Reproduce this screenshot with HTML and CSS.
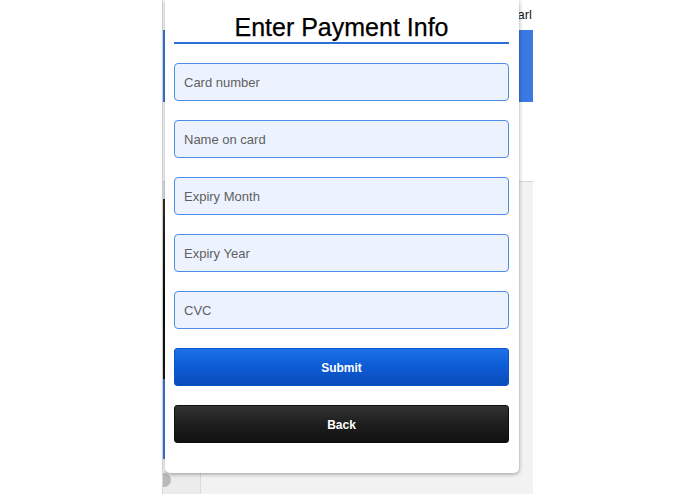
FILE: index.html
```html
<!DOCTYPE html>
<html>
<head>
<meta charset="utf-8">
<link rel="stylesheet" href="styles.css">
</head>
<body>
<div class="page">
  <div class="bg">
    <div class="topbar"><span class="toplink">arl</span></div>
    <div class="band"></div>
    <div class="hero"></div>
    <div class="main">
      <div class="side">
        <div class="side-gap"></div>
        <div class="side-photo"></div>
        <div class="side-blue"></div>
        <div class="side-white"></div>
        <div class="side-foot"><span class="dot"></span></div>
      </div>
      <div class="content"></div>
    </div>
  </div>

  <div class="modal">
    <h1 class="title">Enter Payment Info</h1>
    <form class="form">
      <input class="field" type="text" placeholder="Card number">
      <input class="field" type="text" placeholder="Name on card">
      <input class="field" type="text" placeholder="Expiry Month">
      <input class="field" type="text" placeholder="Expiry Year">
      <input class="field" type="text" placeholder="CVC">
      <button class="btn btn-submit" type="button">Submit</button>
      <button class="btn btn-back" type="button">Back</button>
    </form>
  </div>
</div>
</body>
</html>
```

FILE: styles.css
```css
* { box-sizing: border-box; }

html, body {
  margin: 0;
  padding: 0;
  background: #ffffff;
  font-family: "Liberation Sans", Arial, sans-serif;
}

.page {
  position: relative;
  width: 695px;
  height: 494px;
  overflow: hidden;
}

.bg {
  margin-left: 162px;
  width: 371px;
  height: 494px;
  display: flex;
  flex-direction: column;
  overflow: hidden;
  border-left: 1px solid #d8d8d8;
}

.topbar {
  height: 30px;
  background: #ffffff;
  display: flex;
  justify-content: flex-end;
  align-items: center;
  padding-right: 1px;
}

.toplink {
  font-size: 13px;
  color: #222;
  margin-top: -2px;
}

.band {
  height: 72px;
  background: #3b79e2;
}

.hero {
  height: 80px;
  background: #ffffff;
  border-bottom: 1px solid #d6d6d6;
}

.main {
  flex: 1;
  display: flex;
}

.side {
  width: 38px;
  display: flex;
  flex-direction: column;
  background: #ececec;
  border-right: 1px solid #dadada;
}

.side-gap {
  height: 17px;
  background: #e4e4e4;
}

.side-photo {
  height: 180px;
  background: linear-gradient(180deg, #3a3128 0%, #1a1612 30%, #0d0b09 60%, #1c1712 100%);
}

.side-blue {
  height: 80px;
  background: #3b79e2;
}

.side-white {
  height: 12px;
  background: #ffffff;
}

.side-foot {
  flex: 1;
  background: #ececec;
  position: relative;
}

.dot {
  position: absolute;
  left: -6px;
  top: 2px;
  width: 14px;
  height: 14px;
  border-radius: 50%;
  background: #b9b9b9;
}

.content {
  flex: 1;
  background: #f2f2f2;
}

.modal {
  position: absolute;
  left: 165px;
  top: 0;
  width: 354px;
  height: 473px;
  background: #ffffff;
  border-radius: 0 0 5px 5px;
  box-shadow: 0 1px 4px rgba(0, 0, 0, 0.38);
  padding: 12px 10px 0 9px;
}

.title {
  margin: 0;
  font-size: 25px;
  line-height: 30px;
  font-weight: normal;
  color: #000;
  text-align: center;
  border-bottom: 2px solid #2d6fd8;
  -webkit-text-stroke: 0.25px #000;
}

.form {
  margin-top: 19px;
  display: flex;
  flex-direction: column;
  gap: 19px;
}

.field {
  display: block;
  width: 100%;
  height: 38px;
  margin: 0;
  padding: 0 9px;
  border: 1px solid #4f8ce6;
  border-radius: 4px;
  background: #edf3fe;
  font-family: "Liberation Sans", Arial, sans-serif;
  font-size: 13px;
  color: #333;
  outline: none;
}

.field::placeholder {
  color: #5f5f5f;
  opacity: 1;
}

.btn {
  display: block;
  width: 100%;
  height: 38px;
  margin: 0;
  padding: 2px 0 0;
  border: none;
  border-radius: 3px;
  color: #ffffff;
  font-family: "Liberation Sans", Arial, sans-serif;
  font-size: 12px;
  font-weight: bold;
  cursor: pointer;
}

.btn-submit {
  background: linear-gradient(180deg, #1c70e8 0%, #0d5bd4 50%, #0a4bbb 100%);
  border: 1px solid #0b55c8;
}

.btn-back {
  background: linear-gradient(180deg, #333333 0%, #1e1e1e 50%, #111111 100%);
  border: 1px solid #0f0f0f;
}
```
